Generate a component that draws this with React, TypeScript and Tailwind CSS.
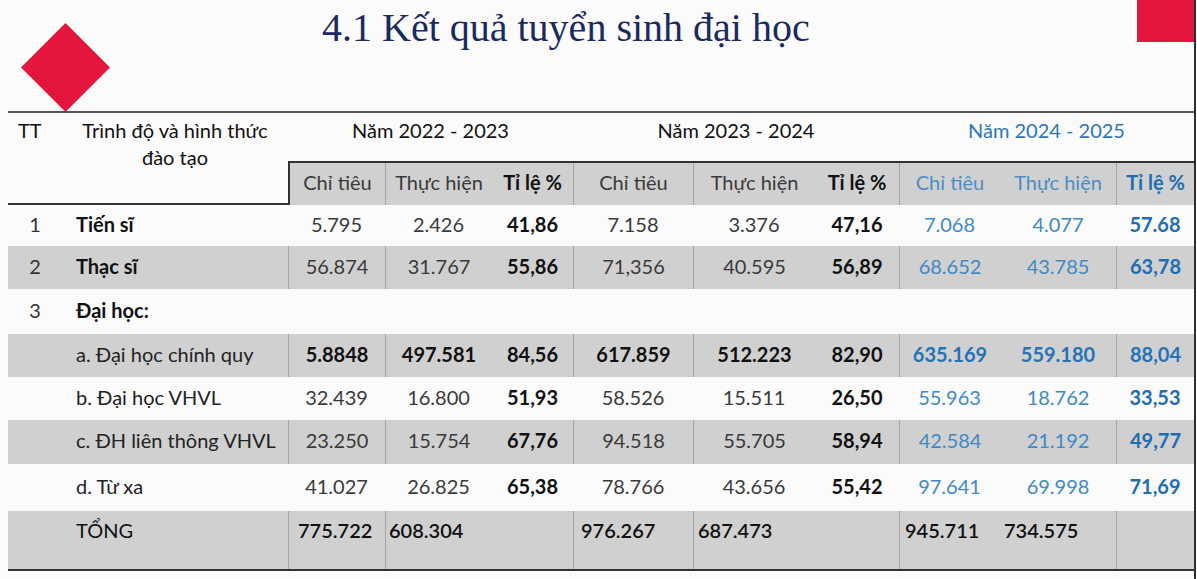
import React from 'react';

interface Row {
  tt?: string;
  label: string;
  bold?: boolean;
  strong?: boolean;
  gray?: boolean;
  h: string;
  vals: string[];
}

const cols =
  'grid grid-cols-[54px_226px_97px_107px_81px_120px_122px_84px_101px_116px_78px]';

// vertical rules only show inside the grey bands
const divide = [false, false, true, true, false, true, true, false, true, false, true];

const rows: Row[] = [
  { tt: '1', label: 'Tiến sĩ', bold: true, h: 'h-[41px]', vals: ['5.795', '2.426', '41,86', '7.158', '3.376', '47,16', '7.068', '4.077', '57.68'] },
  { tt: '2', label: 'Thạc sĩ', bold: true, gray: true, h: 'h-[43px]', vals: ['56.874', '31.767', '55,86', '71,356', '40.595', '56,89', '68.652', '43.785', '63,78'] },
  { tt: '3', label: 'Đại học:', bold: true, h: 'h-[45px]', vals: [] },
  { label: 'a. Đại học chính quy', strong: true, gray: true, h: 'h-[43px]', vals: ['5.8848', '497.581', '84,56', '617.859', '512.223', '82,90', '635.169', '559.180', '88,04'] },
  { label: 'b. Đại học VHVL', h: 'h-[43px]', vals: ['32.439', '16.800', '51,93', '58.526', '15.511', '26,50', '55.963', '18.762', '33,53'] },
  { label: 'c. ĐH liên thông VHVL', gray: true, h: 'h-[44px]', vals: ['23.250', '15.754', '67,76', '94.518', '55.705', '58,94', '42.584', '21.192', '49,77'] },
  { label: 'd. Từ xa', h: 'h-[47px]', vals: ['41.027', '26.825', '65,38', '78.766', '43.656', '55,42', '97.641', '69.998', '71,69'] },
];

const total = ['775.722', '608.304', '', '976.267', '687.473', '', '945.711', '734.575', ''];
const totalPad = ['pl-[9px]', 'pl-[3px]', '', 'pl-[7px]', 'pl-[4px]', '', 'pl-[5px]', 'pl-[4px]', ''];

const subHeads = ['Chỉ tiêu', 'Thực hiện', 'Tỉ lệ %', 'Chỉ tiêu', 'Thực hiện', 'Tỉ lệ %', 'Chỉ tiêu', 'Thực hiện', 'Tỉ lệ %'];

const valueClass = (i: number, strong?: boolean) => {
  const blue = i >= 6;
  const rate = i % 3 === 2;
  if (strong) return blue ? 'text-[#2573b5] font-bold' : 'text-[#111] font-bold';
  if (blue) return rate ? 'text-[#1f6db3] font-bold' : 'text-[#3f89c4]';
  return rate ? 'text-[#111] font-bold' : 'text-[#3a3a3a]';
};

const App = () => {
  return (
    <div className="w-[1196px] h-[579px] border-r-2 border-[#2e2e2e] bg-[#fbfbfb] overflow-hidden font-['Lato',sans-serif] text-[20px]">
      {/* Slide header */}
      <div className="flex h-[111px]">
        <div className="pl-[21px] pt-[23px]">
          <svg width="89" height="89" viewBox="0 0 89 89">
            <polygon points="44.5,0 89,44.5 44.5,89 0,44.5" fill="#e3173e" />
          </svg>
        </div>
        <h1 className="ml-[212px] pt-[8px] font-['Liberation_Serif',serif] text-[40px] leading-none text-[#1b2a5e]">
          4.1 Kết quả tuyển sinh đại học
        </h1>
        <div className="ml-auto w-[57px] h-[42px] bg-[#e3173e]" />
      </div>

      {/* Table */}
      <div className="relative ml-[8px] w-[1186px] border-t-2 border-[#555]">
        <div className={cols}>
          <div className="row-span-2 h-[92px] border-b-2 border-[#333] pl-[10px] pt-[4px] leading-[27px] text-[#111]">TT</div>
          <div className="row-span-2 h-[92px] border-b-2 border-[#333] pt-[4px] text-center leading-[27px] text-[#111]">
            Trình độ và hình thức
            <br />
            đào tạo
          </div>
          <div className="col-span-3 h-[50px] border-b-2 border-[#333] pt-[4px] text-center leading-[27px] text-[#111]">Năm 2022 - 2023</div>
          <div className="col-span-3 h-[50px] border-b-2 border-[#333] pt-[4px] text-center leading-[27px] text-[#111]">Năm 2023 - 2024</div>
          <div className="col-span-3 h-[50px] border-b-2 border-[#333] pt-[4px] text-center leading-[27px] text-[#2b76b9]">Năm 2024 - 2025</div>
          {subHeads.map((s, i) => (
            <div
              key={i}
              className={`flex h-[42px] items-center justify-center pb-[5px] bg-[#d0d0d0] ${
                i === 0 ? 'border-l-2 border-[#333]' : divide[i + 2] ? 'border-l border-[#a6a6a6]' : ''
              } ${i >= 6 ? (i === 8 ? 'font-bold text-[#1f6db3]' : 'text-[#4a8dc5]') : i % 3 === 2 ? 'font-bold text-[#111]' : 'text-[#3a3a3a]'}`}
            >
              {s}
            </div>
          ))}
        </div>

        {rows.map((r, ri) => (
          <div key={ri} className={`${cols} ${r.h} ${r.gray ? 'bg-[#d0d0d0]' : ''}`}>
            <div className="flex items-center justify-center pb-[4px] text-[#333]">{r.tt}</div>
            <div className={`flex items-center pb-[4px] pl-[14px] ${r.bold ? 'font-bold text-[#111]' : 'text-[#222]'}`}>{r.label}</div>
            {Array.from({ length: 9 }).map((_, i) => (
              <div
                key={i}
                className={`flex items-center justify-center pb-[4px] ${r.gray && divide[i + 2] ? 'border-l border-[#a6a6a6]' : ''} ${valueClass(i, r.strong)}`}
              >
                {r.vals[i]}
              </div>
            ))}
          </div>
        ))}

        <div className={`${cols} h-[60px] border-b-2 border-[#333] bg-[#d0d0d0] text-[#111]`}>
          <div />
          <div className="pl-[14px] pt-[4px]">TỔNG</div>
          {total.map((v, i) => (
            <div key={i} className={`pt-[4px] font-semibold ${totalPad[i]} ${divide[i + 2] ? 'border-l border-[#a6a6a6]' : ''}`}>
              {v}
            </div>
          ))}
        </div>
      </div>
    </div>
  );
};

export default App;
